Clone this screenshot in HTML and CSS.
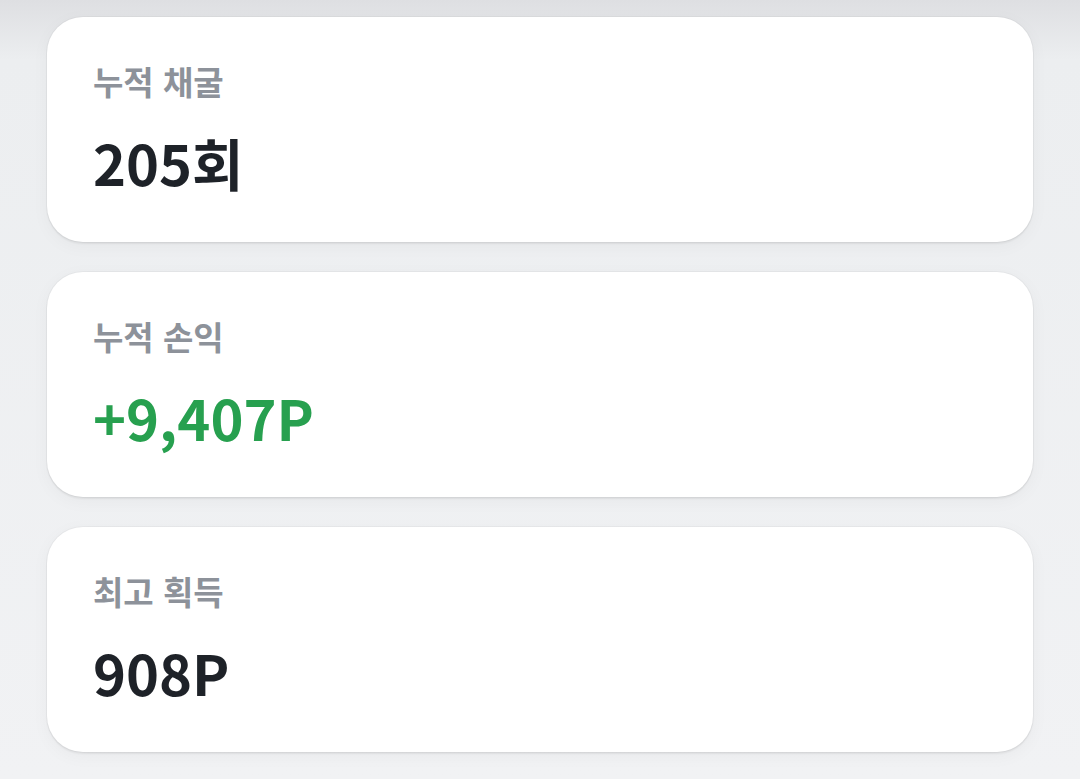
FILE: index.html
```html
<!DOCTYPE html>
<html lang="ko">
<head>
  <meta charset="UTF-8">
  <meta name="viewport" content="width=device-width, initial-scale=1.0">
  <title>채굴 통계</title>
  <link rel="stylesheet" href="styles.css">
</head>
<body>
  <main class="stats">
    <section class="stat-card">
      <div class="stat-label">누적 채굴</div>
      <div class="stat-value">205회</div>
    </section>
    <section class="stat-card">
      <div class="stat-label">누적 손익</div>
      <div class="stat-value positive">+9,407P</div>
    </section>
    <section class="stat-card">
      <div class="stat-label">최고 획득</div>
      <div class="stat-value">908P</div>
    </section>
  </main>
</body>
</html>
```

FILE: styles.css
```css
html, body {
  height: 100%;
}
body {
  margin: 0;
  font-family: "Noto Sans CJK KR", "Noto Sans", sans-serif;
  background: linear-gradient(to bottom, #dedfe2 0px, #eceef0 60px, #f1f2f4 100%);
  overflow: hidden;
}
.stats {
  display: flex;
  flex-direction: column;
  gap: 30px;
  padding: 17px 47px 0 47px;
}
.stat-card {
  background-color: #ffffff;
  border-radius: 36px;
  height: 225px;
  box-sizing: border-box;
  padding: 45px 46px 0 46px;
  box-shadow: 0 2px 2px rgba(0, 0, 0, 0.06), 0 0 0 1px rgba(0, 0, 0, 0.03), 0 4px 18px rgba(0, 0, 0, 0.04);
}
.stat-label {
  font-size: 33px;
  font-weight: 700;
  color: #8d929a;
  line-height: 1.2;
}
.stat-value {
  margin-top: 26px;
  font-size: 56px;
  font-weight: 700;
  color: #1e2228;
  line-height: 1.2;
}
.stat-value.positive {
  color: #27a04f;
}
```
